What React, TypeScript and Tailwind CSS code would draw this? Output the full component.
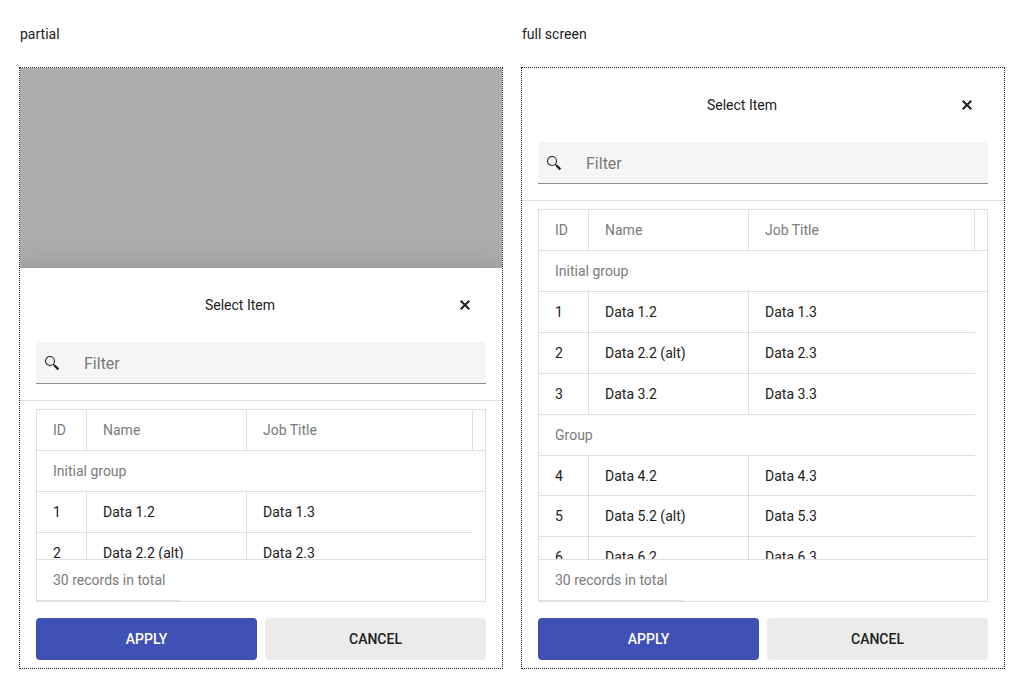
import { useState } from "react";

type Item = { id: number; name: string; title: string };
type Group = { label: string; items: Item[] };

const groups: Group[] = [
  {
    label: "Initial group",
    items: [
      { id: 1, name: "Data 1.2", title: "Data 1.3" },
      { id: 2, name: "Data 2.2 (alt)", title: "Data 2.3" },
      { id: 3, name: "Data 3.2", title: "Data 3.3" },
    ],
  },
  {
    label: "Group",
    items: [
      { id: 4, name: "Data 4.2", title: "Data 4.3" },
      { id: 5, name: "Data 5.2 (alt)", title: "Data 5.3" },
      { id: 6, name: "Data 6.2", title: "Data 6.3" },
    ],
  },
];

function SearchIcon() {
  return (
    <svg className="size-4 shrink-0" viewBox="0 0 16 16" fill="none" stroke="currentColor" aria-hidden="true">
      <circle cx="6" cy="6" r="4.5" strokeWidth="1.1" />
      <path d="M9.2 9.2 10.8 10.8" strokeWidth="1.2" />
      <path d="M10.2 10.2 14.4 14.4" strokeWidth="2.2" />
    </svg>
  );
}

function CloseIcon() {
  return (
    <svg className="size-4" viewBox="0 0 16 16" fill="none" stroke="currentColor" strokeWidth="2" aria-hidden="true">
      <path d="M3.7 3.7 12.3 12.3M12.3 3.7 3.7 12.3" />
    </svg>
  );
}

function SheetHeader({ name }: { name: string }) {
  const [filter, setFilter] = useState("");
  return (
    <header className="flex flex-col gap-4 border-b border-[#dfdfdf] p-4">
      <div className="flex items-center">
        <h2 className="flex-1 text-center">Select Item</h2>
        <button type="button" aria-label="Close" className="flex size-[42px] items-center justify-center">
          <CloseIcon />
        </button>
      </div>
      <label
        htmlFor={`${name}-filter`}
        className="flex h-[42px] items-center rounded-t border-b border-[#8f8f8f] bg-[#f5f5f5] px-2"
      >
        <SearchIcon />
        <input
          id={`${name}-filter`}
          type="text"
          aria-label="Filter"
          placeholder="Filter"
          value={filter}
          onChange={(e) => setFilter(e.target.value)}
          className="ml-6 min-w-0 flex-1 bg-transparent pt-0.5 text-base outline-none placeholder:text-[#7a7a7a]"
        />
      </label>
    </header>
  );
}

function ItemGrid() {
  const head = "border-b border-r border-[#dfdfdf] px-4 text-left font-normal";
  const cell = "border-b border-r border-[#dfdfdf] px-4";
  return (
    <div className="flex min-h-0 flex-1 flex-col border border-[#dfdfdf]">
      <div className="min-h-0 flex-1 overflow-hidden">
        <table className="w-full table-fixed border-separate border-spacing-0">
          <colgroup>
            <col className="w-[50px]" />
            <col className="w-40" />
            <col />
            <col className="w-3" />
          </colgroup>
          <thead className="text-[#7a7a7a]">
            <tr className="h-[41px]">
              <th scope="col" className={head}>ID</th>
              <th scope="col" className={head}>Name</th>
              <th scope="col" className={head}>Job Title</th>
              <td className="border-b border-[#dfdfdf]" />
            </tr>
          </thead>
          {groups.map((group, groupIndex) => (
            <tbody key={group.label}>
              <tr className="h-[41px]">
                <th
                  scope="rowgroup"
                  colSpan={groupIndex === 0 ? 4 : 3}
                  className="border-b border-[#dfdfdf] px-4 text-left font-normal text-[#7a7a7a]"
                >
                  {group.label}
                </th>
              </tr>
              {group.items.map((item, itemIndex) => (
                <tr key={item.id} className={groupIndex > 0 && itemIndex === 0 ? "h-10" : "h-[41px]"}>
                  <td className={cell}>{item.id}</td>
                  <td className={cell}>{item.name}</td>
                  <td className="border-b border-[#dfdfdf] px-4">{item.title}</td>
                  <td />
                </tr>
              ))}
            </tbody>
          ))}
        </table>
      </div>
      <div className="flex border-t border-[#dfdfdf] text-[#7a7a7a]">
        <span className="border-b border-[#dfdfdf] px-4 py-[10px]">30 records in total</span>
      </div>
    </div>
  );
}

function Sheet({ name }: { name: string }) {
  return (
    <section className="flex min-h-0 flex-1 flex-col bg-white shadow-[0_6px_30px_5px_rgba(0,0,0,0.16)]">
      <SheetHeader name={name} />
      <div className="flex min-h-0 flex-1 flex-col px-4 pt-2 pb-4">
        <ItemGrid />
      </div>
      <footer className="flex gap-2 px-4 pb-2 font-medium">
        <button type="button" className="h-[42px] flex-1 rounded bg-[#3f51b5] text-white">
          APPLY
        </button>
        <button type="button" className="h-[42px] flex-1 rounded bg-[#ebebeb]">
          CANCEL
        </button>
      </footer>
    </section>
  );
}

const panel =
  "flex h-[calc(100vh-86px)] min-h-[480px] flex-col overflow-hidden border border-dotted border-[#1f1f1f]";

export default function App() {
  return (
    <main className="grid grid-cols-2 gap-[18px] bg-white px-[19px] pt-6 font-['Roboto',sans-serif] text-sm text-[#212121]">
      <div className="flex flex-col gap-[23px]">
        <h1 className="px-px">partial</h1>
        <div className={`${panel} bg-[#adadad] bg-clip-padding pt-[200px]`}>
          <Sheet name="partial" />
        </div>
      </div>
      <div className="flex flex-col gap-[23px]">
        <h1 className="px-px">full screen</h1>
        <div className={panel}>
          <Sheet name="full" />
        </div>
      </div>
    </main>
  );
}
